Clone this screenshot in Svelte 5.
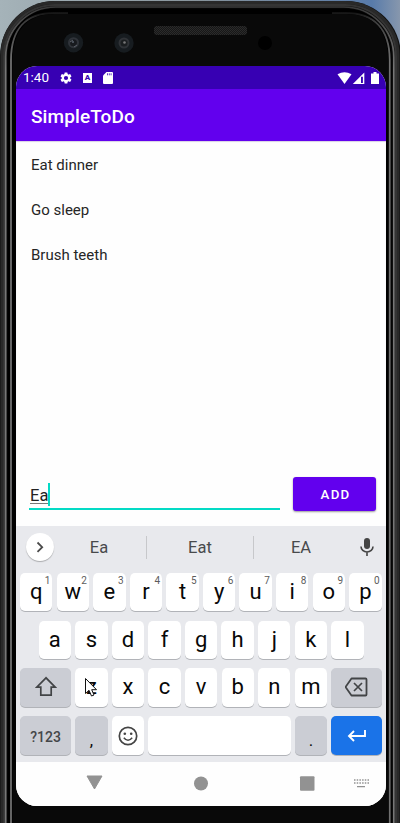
<script>
  const todos = ['Eat dinner', 'Go sleep', 'Brush teeth'];
  const top = [...'qwertyuiop'];
  const middle = [...'asdfghjkl'];
  const bottom = [...'zxcvbnm'];
</script>

<div class="device">
  <svg class="frame" width="400" height="823" viewBox="0 0 400 823" aria-hidden="true">
    <defs>
      <linearGradient id="sky" x1="0" y1="0" x2="1" y2="0">
        <stop offset="0" stop-color="#a5b3b9" />
        <stop offset=".5" stop-color="#87939b" />
        <stop offset=".93" stop-color="#587baa" />
        <stop offset="1" stop-color="#8797ad" />
      </linearGradient>
      <pattern id="mesh" width="2" height="2" patternUnits="userSpaceOnUse">
        <rect width="2" height="2" fill="#171717" />
        <rect width="1" height="1" fill="#2b2b2b" />
        <rect x="1" y="1" width="1" height="1" fill="#2b2b2b" />
      </pattern>
      <linearGradient id="rim" x1="0" y1="0" x2="0" y2="70" gradientUnits="userSpaceOnUse">
        <stop offset="0" stop-color="#333" />
        <stop offset=".2" stop-color="#444" />
        <stop offset="1" stop-color="#777" />
      </linearGradient>
      <linearGradient id="glint" x1="0" y1="11" x2="0" y2="60" gradientUnits="userSpaceOnUse">
        <stop offset="0" stop-color="#0c0c0c" />
        <stop offset=".2" stop-color="#3c3c3c" />
        <stop offset="1" stop-color="#707070" />
      </linearGradient>
    </defs>
    <rect width="400" height="60" fill="url(#sky)" />
    <rect x="0" y="1" width="401" height="900" rx="55" fill="#111" />
    <rect x="2" y="2.500" width="396" height="900" rx="53" fill="none" stroke="#292929" stroke-width="3" />
    <rect x="4" y="5" width="392" height="900" rx="51" fill="none" stroke="#343434" stroke-width="2" />
    <rect x="5.700" y="7" width="388.100" height="900" rx="50" fill="#080808" stroke="url(#rim)" stroke-width="1.700" />
    <rect x="7.500" y="8.500" width="384" height="900" rx="47" fill="#000" />
    <path d="M11 823V60C11 29 26 13 54 13H68" fill="none" stroke="url(#glint)" stroke-width="1.800" />
    <path d="M389.700 823V60C389.700 29 374 13 346 13H332" fill="none" stroke="url(#glint)" stroke-width="1.800" />
    <path d="M12.500 823V62C12.500 30 27 14 55 14H346C374 14 388.200 30 388.200 62V823Z" fill="#090909" />
    <path d="M12 100H16V770H12ZM386 100H388V770H386Z" fill="#000" />
    <rect x="154" y="26" width="93" height="9" rx="3" fill="url(#mesh)" />
    <g>
      <circle cx="73.500" cy="42.700" r="9.700" fill="#171c20" />
      <circle cx="73.500" cy="42.700" r="5.500" fill="#30343a" />
      <circle cx="73.500" cy="42.700" r="3.500" fill="#171a1e" />
      <path d="m70 42 3-2m1 7 3-2" stroke="#5d626a" />
      <circle cx="73" cy="42" r="1" fill="#59616c" />
      <circle cx="124" cy="43" r="9.700" fill="#171c20" />
      <circle cx="124" cy="43" r="5.500" fill="#303337" />
      <circle cx="124" cy="43" r="3.500" fill="#1b1e20" />
      <circle cx="124.500" cy="42.500" r="1.300" fill="#777" />
      <circle cx="265" cy="43" r="7" fill="#000" />
    </g>
  </svg>

  <main class="screen">
    <div class="status">
      <span class="time">1:40</span>
      <svg class="gear" width="14" height="14" viewBox="0 0 24 24"><path fill="#fff" d="M19.140 12.940c.04-.3.06-.61.06-.94 0-.32-.02-.64-.07-.94l2.030-1.580c.18-.14.23-.41.12-.61l-1.920-3.320c-.12-.22-.37-.29-.59-.22l-2.390.96c-.5-.38-1.030-.7-1.620-.94l-.36-2.540c-.04-.24-.24-.41-.48-.41h-3.840c-.24 0-.43.17-.47.41l-.36 2.540c-.59.24-1.130.57-1.620.94l-2.390-.96c-.22-.08-.47 0-.59.22L2.740 8.870c-.12.21-.08.47.12.61l2.030 1.580c-.05.3-.09.63-.09.94s.02.64.07.94l-2.030 1.580c-.18.14-.23.41-.12.61l1.920 3.320c.12.22.37.29.59.22l2.390-.96c.5.38 1.030.7 1.620.94l.36 2.540c.05.24.24.41.48.41h3.840c.24 0 .44-.17.47-.41l.36-2.540c.59-.24 1.130-.56 1.620-.94l2.390.96c.22.08.47 0 .59-.22l1.920-3.320c.12-.22.07-.47-.12-.61l-2.010-1.580zM12 15.600a3.600 3.600 0 1 1 0-7.200 3.600 3.600 0 0 1 0 7.200z" /></svg>
      <span class="badge">A</span>
      <svg class="sd" width="10" height="12" viewBox="0 0 10 12"><path fill="#fff" d="M3.500 0H9a1 1 0 0 1 1 1v10a1 1 0 0 1-1 1H1a1 1 0 0 1-1-1V3.500z" /><path d="M4.500 1.300v2M6.300 1.300v2M8.100 1.300v2" stroke="#3700b3" stroke-width=".8" /></svg>
      <svg class="signals" width="42" height="12" viewBox="0 0 42 12">
        <path d="M.5 2.300Q7.500-2 14.500 2.300L7.500 12Z" fill="#fff" />
        <path d="M15.800 12 27.300.5V12Z" fill="#fff" /><path d="M24 4.700h1.900V11H24z" fill="#3700b3" />
        <path d="M34 1.500h2.500V0h3v1.500H42V12h-8z" fill="#fff" />
      </svg>
    </div>
    <header>SimpleToDo</header>

    <section class="content">
      <ul>
        {#each todos as todo}<li>{todo}</li>{/each}
      </ul>
      <div class="entry">
        <div class="field"><span class="typed">Ea</span><i class="caret"></i></div>
        <button class="add">ADD</button>
      </div>
    </section>

    <section class="keyboard">
      <div class="suggestions">
        <span class="more"><svg width="28" height="28" viewBox="0 0 28 28"><path d="m11.500 9.500 4.700 4.700-4.700 4.700" fill="none" stroke="#4a4a4a" stroke-width="1.800" /></svg></span>
        <span class="word">Ea</span><span class="word mid">Eat</span><span class="word last">EA</span>
        <svg class="mic" width="14" height="20" viewBox="0 0 14 20"><rect x="4" y="1" width="6" height="11" rx="3" fill="#444" /><path d="M1 9.500a6 5.500 0 0 0 12 0M7 15v4" fill="none" stroke="#444" stroke-width="1.600" /></svg>
      </div>
      <div class="rows">
        <div class="row">
          {#each top as key, i}<span class="key">{key}<sup>{(i + 1) % 10}</sup></span>{/each}
        </div>
        <div class="row center">
          {#each middle as key}<span class="key">{key}</span>{/each}
        </div>
        <div class="row">
          <span class="key wide gray"><svg width="22" height="22" viewBox="0 0 22 22"><path d="M11 1.800 1.800 11.200h4v8h10.400v-8h4z" fill="none" stroke="#424446" stroke-width="1.700" /></svg></span>
          {#each bottom as key}<span class="key">{key}</span>{/each}
          <span class="key wide gray"><svg width="24" height="20" viewBox="0 0 24 20"><path d="M7.500 1.500H21.500a1 1 0 0 1 1 1v15a1 1 0 0 1-1 1H7.500L1.500 10z" fill="none" stroke="#424446" stroke-width="1.800" stroke-linejoin="round" transform="translate(-1 0)" /><path d="m9 6 8 8m0-8-8 8" stroke="#424446" stroke-width="1.700" /></svg></span>
        </div>
        <div class="row tall">
          <span class="key wide gray symbols">?123</span>
          <span class="key gray low">,</span>
          <span class="key"><svg width="20" height="20" viewBox="0 0 20 20"><circle cx="10" cy="10" r="8.700" fill="none" stroke="#444" stroke-width="1.700" /><circle cx="6.800" cy="7.800" r="1.300" fill="#444" /><circle cx="13.200" cy="7.800" r="1.300" fill="#444" /><path d="M5.800 11.800q4.200 5 8.400 0" fill="none" stroke="#444" stroke-width="1.500" /></svg></span>
          <span class="key space"></span>
          <span class="key gray low">.</span>
          <span class="key wide enter"><svg width="20" height="12" viewBox="0 0 20 12"><path d="M18 0v6H2M7 1 2 6l5 5" fill="none" stroke="#fff" stroke-width="1.900" /></svg></span>
        </div>
      </div>
    </section>

    <nav>
      <svg width="370" height="44" viewBox="0 0 370 44">
        <path d="M71 14h15l-7.500 13z" fill="#929292" stroke="#929292" stroke-linejoin="round" />
        <circle cx="185" cy="21.500" r="7" fill="#929292" />
        <rect x="284" y="14.300" width="14.500" height="14.500" rx="1" fill="#929292" />
        <path d="M338 18h15M338 21h15" stroke="#929292" stroke-width="1.300" stroke-dasharray="1.500 1.200" />
        <path d="M341 24.700h8" stroke="#929292" stroke-width="1.300" />
      </svg>
    </nav>
  </main>

  <svg class="pointer" width="14" height="21" viewBox="0 0 14 21"><path d="M1.500 1.500v15l3.500-3.200L7.500 19l2.500-1-2.300-5.300h4.800z" fill="#fff" stroke="#111" stroke-width="1" /></svg>
</div>

<style>
  :global(body) { margin: 0; background: #000; }
  .device {
    position: relative;
    box-sizing: border-box;
    width: 400px;
    height: 823px;
    padding: 66px 14px 17px 16px;
    overflow: hidden;
    font-family: Roboto, sans-serif;
  }
  .frame { position: absolute; left: 0; top: 0; }
  .screen {
    position: relative;
    display: flex;
    flex-direction: column;
    height: 740px;
    border-radius: 21px;
    overflow: hidden;
    background: #fefefe;
  }
  .status {
    display: flex;
    align-items: center;
    height: 23px;
    padding: 0 7px 0 7px;
    background: #3700b3;
    color: #fff;
  }
  .time { width: 36px; font-size: 13.500px; line-height: 23px; }
  .gear { margin-right: 10px; }
  .badge {
    width: 9px;
    height: 10px;
    margin-right: 11px;
    background: #fff;
    color: #3700b3;
    font-size: 8px;
    font-weight: 900;
    line-height: 10px;
    text-align: center;
  }
  .signals { margin-left: auto; }
  header {
    height: 52px;
    padding-left: 15px;
    background: #6200ee;
    color: #fff;
    font-size: 19px;
    font-weight: 500;
    line-height: 55px;
    letter-spacing: .1px;
  }
  .content {
    display: flex;
    flex-direction: column;
    justify-content: space-between;
    height: 385px;
    box-shadow: inset 0 1px 1px #d8d0e4;
  }
  ul { margin: 0; padding: 1px 15px; list-style: none; }
  li { height: 45.200px; color: #262626; font-size: 15px; line-height: 46px; }
  .entry {
    display: flex;
    align-items: flex-start;
    justify-content: space-between;
    height: 49px;
    padding: 0 10px 0 13px;
  }
  .field {
    display: flex;
    box-sizing: border-box;
    width: 251px;
    height: 33px;
    padding-top: 6px;
    border-bottom: 2px solid #03dac5;
  }
  .typed {
    height: 22px;
    padding-left: 1px;
    color: #222;
    font-size: 16.500px;
    line-height: 25px;
    text-decoration: underline 1px #777;
    text-underline-offset: 2px;
  }
  .caret { width: 2px; height: 23px; background: #03dac5; }
  .add {
    width: 83px;
    height: 34px;
    padding: 0 0 0 2px;
    border: 0;
    border-radius: 3px;
    background: #6200ee;
    box-shadow: 0 1px 2px #0006;
    color: #fff;
    font: 500 13.300px/36px Roboto, sans-serif;
    letter-spacing: 1.200px;
  }
  .keyboard { height: 236px; background: #e8e9ed; }
  .suggestions { display: flex; align-items: center; height: 42px; padding-left: 10px; }
  .more {
    flex: none;
    width: 28px;
    height: 28px;
    border-radius: 50%;
    background: #fff;
    box-shadow: 0 1px 1px #0004;
  }
  .more svg { display: block; }
  .word {
    flex: none;
    box-sizing: border-box;
    width: 92px;
    height: 23px;
    color: #484a4c;
    font-size: 16.500px;
    line-height: 24px;
    text-align: center;
  }
  .word:nth-child(2) { width: 92px; padding-right: 2px; }
  .mid { width: 108px; border-left: 1px solid #c7c8cb; border-right: 1px solid #c7c8cb; }
  .word.last { width: 94px; }
  .mic { flex: none; margin-left: 12px; }
  .rows { display: flex; flex-direction: column; gap: 9.300px; padding: 5px 4px 0; }
  .row { display: flex; gap: 4.200px; height: 38.400px; }
  .center { padding-left: 18.600px; }
  .key {
    position: relative;
    display: flex;
    flex: none;
    align-items: center;
    justify-content: center;
    box-sizing: border-box;
    width: 32.400px;
    height: 38.200px;
    border-radius: 5px;
    background: #fff;
    box-shadow: 0 1px 0 #b1b3b8;
    color: #080808;
    font-size: 22px;
    line-height: 38px;
  }
  .tall .key { height: 39px; }
  .wide { width: 51px; }
  .gray { background: #cbcdd4; }
  .symbols { padding-top: 2px; color: #444648; font-size: 14px; font-weight: 500; }
  .low { padding-top: 8px; font-size: 17px; }
  .space { width: 142.200px; }
  .enter { background: #1a73e8; }
  sup {
    position: absolute;
    top: 2px;
    right: 2px;
    color: #5c5c5c;
    font-size: 10px;
    line-height: 11px;
  }
  nav { height: 44px; background: #fefefe; }
  nav svg { display: block; }
  .pointer { position: absolute; left: 84px; top: 677px; }
</style>
